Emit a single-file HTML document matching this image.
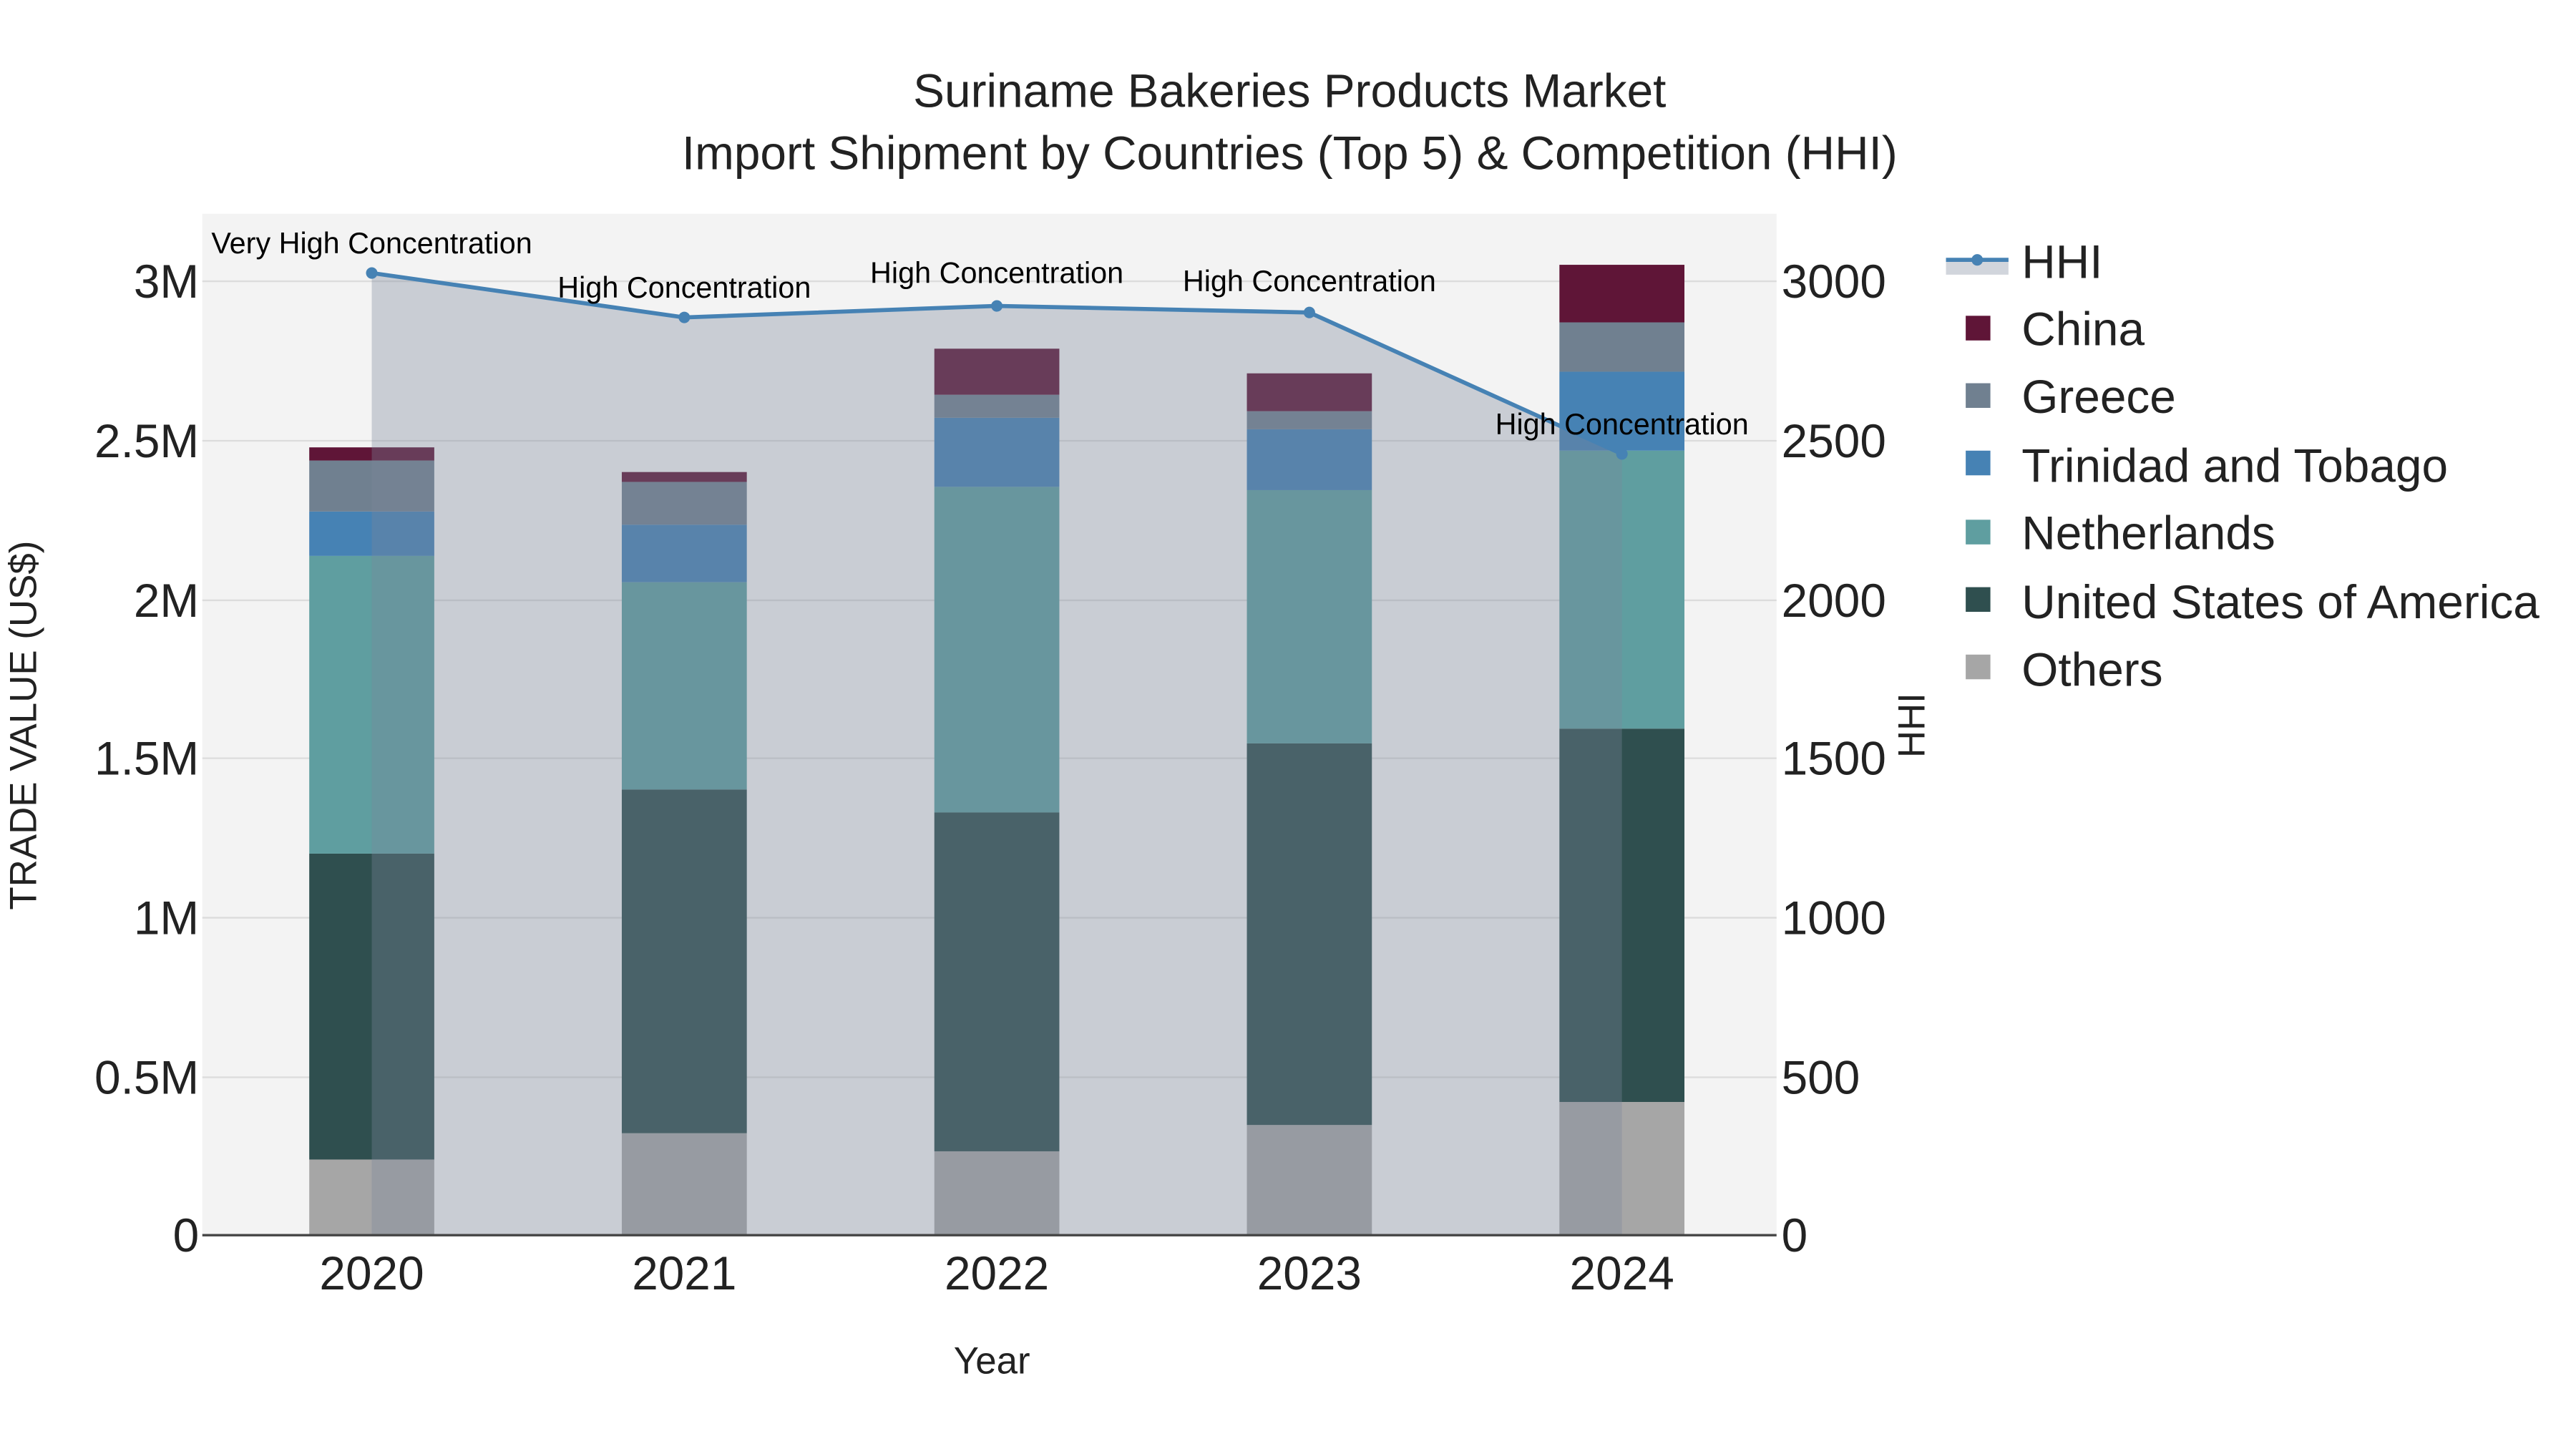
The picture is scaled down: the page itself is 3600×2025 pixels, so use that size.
<!DOCTYPE html>
<html><head><meta charset="utf-8"><style>
html,body{margin:0;padding:0;background:#fff;}
svg{display:block;}
text{font-family:"Liberation Sans",sans-serif;}
</style></head><body>
<svg width="3600" height="2025" viewBox="0 0 1566 881" preserveAspectRatio="none" xmlns="http://www.w3.org/2000/svg">
<rect width="1566" height="881" fill="#fff"/>
<rect x="123" y="130" width="957" height="621" fill="#f3f3f3"/>
<g stroke="#dcdcdc" stroke-width="1">
<line x1="123" x2="1080" y1="171" y2="171"/><line x1="123" x2="1080" y1="268" y2="268"/>
<line x1="123" x2="1080" y1="365" y2="365"/><line x1="123" x2="1080" y1="461" y2="461"/>
<line x1="123" x2="1080" y1="558" y2="558"/><line x1="123" x2="1080" y1="655" y2="655"/>
</g>
<g>
<rect x="188" y="705" width="76" height="46" fill="#a6a6a6"/>
<rect x="188" y="519" width="76" height="186" fill="#2f4f4f"/>
<rect x="188" y="338" width="76" height="181" fill="#5f9ea0"/>
<rect x="188" y="311" width="76" height="27" fill="#4682b4"/>
<rect x="188" y="280" width="76" height="31" fill="#708090"/>
<rect x="188" y="272" width="76" height="8" fill="#5f1537"/>
<rect x="378" y="689" width="76" height="62" fill="#a6a6a6"/>
<rect x="378" y="480" width="76" height="209" fill="#2f4f4f"/>
<rect x="378" y="354" width="76" height="126" fill="#5f9ea0"/>
<rect x="378" y="319" width="76" height="35" fill="#4682b4"/>
<rect x="378" y="293" width="76" height="26" fill="#708090"/>
<rect x="378" y="287" width="76" height="6" fill="#5f1537"/>
<rect x="568" y="700" width="76" height="51" fill="#a6a6a6"/>
<rect x="568" y="494" width="76" height="206" fill="#2f4f4f"/>
<rect x="568" y="296" width="76" height="198" fill="#5f9ea0"/>
<rect x="568" y="254" width="76" height="42" fill="#4682b4"/>
<rect x="568" y="240" width="76" height="14" fill="#708090"/>
<rect x="568" y="212" width="76" height="28" fill="#5f1537"/>
<rect x="758" y="684" width="76" height="67" fill="#a6a6a6"/>
<rect x="758" y="452" width="76" height="232" fill="#2f4f4f"/>
<rect x="758" y="298" width="76" height="154" fill="#5f9ea0"/>
<rect x="758" y="261" width="76" height="37" fill="#4682b4"/>
<rect x="758" y="250" width="76" height="11" fill="#708090"/>
<rect x="758" y="227" width="76" height="23" fill="#5f1537"/>
<rect x="948" y="670" width="76" height="81" fill="#a6a6a6"/>
<rect x="948" y="443" width="76" height="227" fill="#2f4f4f"/>
<rect x="948" y="274" width="76" height="169" fill="#5f9ea0"/>
<rect x="948" y="226" width="76" height="48" fill="#4682b4"/>
<rect x="948" y="196" width="76" height="30" fill="#708090"/>
<rect x="948" y="161" width="76" height="35" fill="#5f1537"/>
</g>
<polygon points="226,166 416,193 606,186 796,190 986,276 986,751 226,751" fill="rgba(123,134,154,0.35)"/>
<polyline points="226,166 416,193 606,186 796,190 986,276" fill="none" stroke="#4682b4" stroke-width="2.5"/>
<g fill="#4682b4"><circle cx="226" cy="166" r="3.5"/><circle cx="416" cy="193" r="3.5"/><circle cx="606" cy="186" r="3.5"/><circle cx="796" cy="190" r="3.5"/><circle cx="986" cy="276" r="3.5"/></g>
<line x1="123" x2="1080" y1="751" y2="751" stroke="#444" stroke-width="1.5"/>
<g font-size="18" fill="#000" text-anchor="middle">
<text x="226" y="154">Very High Concentration</text>
<text x="416" y="181">High Concentration</text>
<text x="606" y="172">High Concentration</text>
<text x="796" y="177">High Concentration</text>
<text x="986" y="264">High Concentration</text>
</g>
<g font-size="28.6" fill="#222" text-anchor="end">
<text x="121" y="181">3M</text><text x="121" y="278">2.5M</text><text x="121" y="375">2M</text>
<text x="121" y="471">1.5M</text><text x="121" y="568">1M</text><text x="121" y="665">0.5M</text><text x="121" y="761">0</text>
</g>
<g font-size="28.6" fill="#222">
<text x="1083" y="181">3000</text><text x="1083" y="278">2500</text><text x="1083" y="375">2000</text>
<text x="1083" y="471">1500</text><text x="1083" y="568">1000</text><text x="1083" y="665">500</text><text x="1083" y="761">0</text>
</g>
<g font-size="28.6" fill="#222" text-anchor="middle">
<text x="226" y="784">2020</text><text x="416" y="784">2021</text><text x="606" y="784">2022</text><text x="796" y="784">2023</text><text x="986" y="784">2024</text>
</g>
<text x="603" y="835" font-size="23" fill="#222" text-anchor="middle">Year</text>
<text transform="translate(22,441) rotate(-90)" font-size="23" fill="#222" text-anchor="middle">TRADE VALUE (US$)</text>
<text transform="translate(1170,441) rotate(-90)" font-size="23" fill="#222" text-anchor="middle">HHI</text>
<g font-size="28.6" fill="#222" text-anchor="middle">
<text x="784" y="65">Suriname Bakeries Products Market</text>
<text x="784" y="103">Import Shipment by Countries (Top 5) &amp; Competition (HHI)</text>
</g>
<rect x="1183" y="158" width="38" height="9" fill="rgba(123,134,154,0.35)"/>
<line x1="1183" x2="1221" y1="158" y2="158" stroke="#4682b4" stroke-width="2.5"/>
<circle cx="1202" cy="158" r="3.5" fill="#4682b4"/>
<g>
<rect x="1195" y="192" width="15" height="15" fill="#5f1537"/>
<rect x="1195" y="233" width="15" height="15" fill="#708090"/>
<rect x="1195" y="274" width="15" height="15" fill="#4682b4"/>
<rect x="1195" y="316" width="15" height="15" fill="#5f9ea0"/>
<rect x="1195" y="357" width="15" height="15" fill="#2f4f4f"/>
<rect x="1195" y="398" width="15" height="15" fill="#a6a6a6"/>
</g>
<g font-size="28.6" fill="#222">
<text x="1229" y="169">HHI</text>
<text x="1229" y="210">China</text>
<text x="1229" y="251">Greece</text>
<text x="1229" y="293">Trinidad and Tobago</text>
<text x="1229" y="334">Netherlands</text>
<text x="1229" y="376">United States of America</text>
<text x="1229" y="417">Others</text>
</g>
</svg>
</body></html>
